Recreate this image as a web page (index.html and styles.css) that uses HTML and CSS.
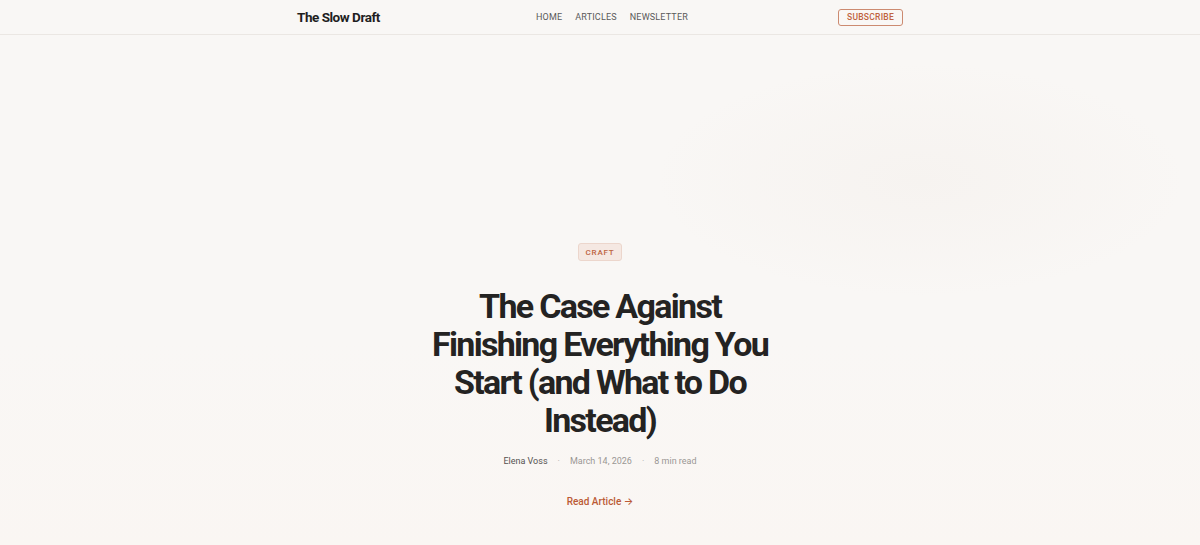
FILE: index.html
```html
<!DOCTYPE html>
<html lang="en">
<head>
<meta charset="utf-8">
<title>The Slow Draft</title>
<link rel="stylesheet" href="styles.css">
</head>
<body>
<header class="site-header">
  <div class="header-inner">
    <a class="logo" href="#">The Slow Draft</a>
    <nav class="nav">
      <a href="#">Home</a>
      <a href="#">Articles</a>
      <a href="#">Newsletter</a>
    </nav>
    <a class="subscribe" href="#">Subscribe</a>
  </div>
</header>
<main class="hero">
  <div class="glow"></div>
  <div class="hero-content">
    <span class="tag">Craft</span>
    <h1 class="title">The Case Against Finishing Everything You Start (and What to Do Instead)</h1>
    <div class="meta">
      <span class="author">Elena Voss</span>
      <span class="dot">·</span>
      <span>March 14, 2026</span>
      <span class="dot">·</span>
      <span>8 min read</span>
    </div>
    <a class="read" href="#">Read Article →</a>
  </div>
</main>
</body>
</html>
```

FILE: styles.css
```css
* { box-sizing: border-box; }
html, body { margin: 0; padding: 0; }
body {
  font-family: Roboto, Inter, "Liberation Sans", sans-serif;
  background: #f9f7f5;
  color: #222;
  height: 545px;
  overflow: hidden;
}
a { text-decoration: none; color: inherit; }

.site-header {
  height: 35px;
  border-bottom: 1px solid #ebe7e3;
  background: #f9f7f5;
  position: relative;
  z-index: 2;
}
.header-inner {
  width: 606px;
  margin: 0 auto;
  height: 34px;
  display: flex;
  align-items: center;
  justify-content: space-between;
}
.logo {
  font-size: 13.5px;
  font-weight: 700;
  letter-spacing: -0.035em;
  color: #1f1f1f;
}
.nav {
  display: flex;
  gap: 13px;
  margin-left: 6px;
}
.nav a {
  font-size: 9px;
  text-transform: uppercase;
  letter-spacing: 0.02em;
  color: #5a5a5a;
}
.subscribe {
  font-size: 8.5px;
  font-weight: 500;
  text-transform: uppercase;
  letter-spacing: 0.03em;
  color: #c0633f;
  border: 1px solid #cc8a70;
  border-radius: 3px;
  padding: 0 8px;
  height: 17px;
  display: flex;
  align-items: center;
}

.hero {
  position: relative;
  height: 510px;
  background: linear-gradient(180deg, #f9f7f5 0%, #f9f7f5 60%, #faf6f3 100%);
}
.glow {
  position: absolute;
  left: 660px;
  top: 30px;
  width: 520px;
  height: 230px;
  border-radius: 50%;
  background: radial-gradient(ellipse at center, rgba(238,231,225,0.25) 0%, rgba(242,236,231,0.12) 50%, rgba(249,247,245,0) 72%);
  pointer-events: none;
}
.hero-content {
  position: relative;
  display: flex;
  flex-direction: column;
  align-items: center;
  padding-top: 208px;
}
.tag {
  font-size: 8px;
  font-weight: 500;
  text-transform: uppercase;
  letter-spacing: 0.1em;
  color: #bd6440;
  background: #f5e8e2;
  border: 1px solid #ecd6cc;
  border-radius: 3px;
  width: 44px;
  height: 18px;
  display: flex;
  align-items: center;
  justify-content: center;
}
.title {
  margin: 26px 0 0;
  width: 360px;
  text-align: center;
  font-size: 34px;
  line-height: 38px;
  font-weight: 700;
  letter-spacing: -0.05em;
  color: #242322;
}
.meta {
  margin-top: 14px;
  display: flex;
  gap: 10px;
  font-size: 9px;
  color: #9a9795;
  line-height: 16px;
}
.meta .author { color: #555351; }
.meta .dot { color: #aaa; }
.read {
  margin-top: 26px;
  font-size: 10px;
  font-weight: 500;
  color: #bb5a35;
}
```
